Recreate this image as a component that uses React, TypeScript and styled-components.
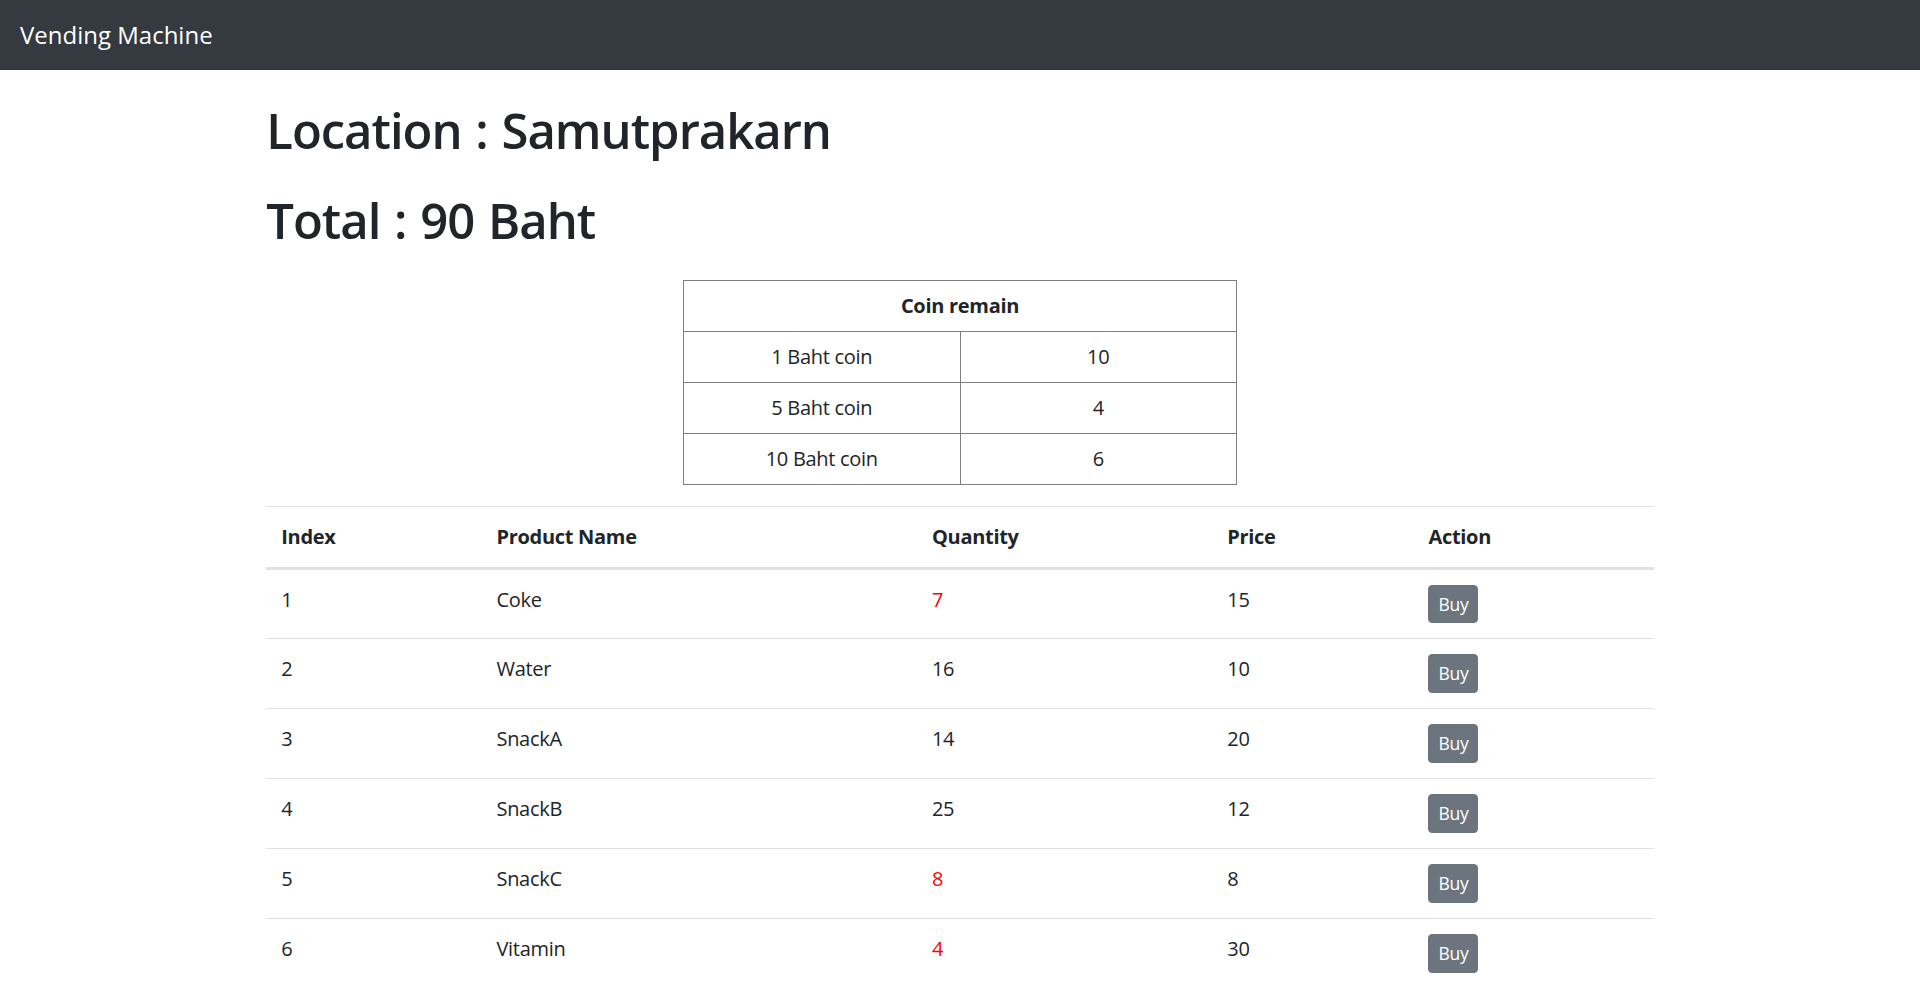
import React from "react";
import styled, { createGlobalStyle } from "styled-components";

const GlobalStyle = createGlobalStyle`
  * { box-sizing: border-box; }
  body {
    margin: 0;
    font-family: "Open Sans", "Noto Sans", sans-serif;
    font-size: 20px;
    line-height: 1.5;
    color: #212529;
    background: #fff;
  }
`;

interface Product {
  name: string;
  quantity: number;
  price: number;
}

const products: Product[] = [
  { name: "Coke", quantity: 7, price: 15 },
  { name: "Water", quantity: 16, price: 10 },
  { name: "SnackA", quantity: 14, price: 20 },
  { name: "SnackB", quantity: 25, price: 12 },
  { name: "SnackC", quantity: 8, price: 8 },
  { name: "Vitamin", quantity: 4, price: 30 },
];

const coins = [
  { label: "1 Baht coin", amount: 10 },
  { label: "5 Baht coin", amount: 4 },
  { label: "10 Baht coin", amount: 6 },
];

const columns = [
  { title: "Index", width: 215 },
  { title: "Product Name", width: 435 },
  { title: "Quantity", width: 295 },
  { title: "Price", width: 201 },
  { title: "Action", width: 240 },
];

function App() {
  return (
    <>
      <GlobalStyle />
      <Navbar>
        <Brand>Vending Machine</Brand>
      </Navbar>
      <Container>
        <Heading>Location : Samutprakarn</Heading>
        <Heading $last>Total : 90 Baht</Heading>
        <CoinTable>
          <thead>
            <tr>
              <th colSpan={2}>Coin remain</th>
            </tr>
          </thead>
          <tbody>
            {coins.map((c) => (
              <tr key={c.label}>
                <td>{c.label}</td>
                <td>{c.amount}</td>
              </tr>
            ))}
          </tbody>
        </CoinTable>
        <ProductTable>
          <colgroup>
            {columns.map((c) => (
              <Col key={c.title} $w={c.width} />
            ))}
          </colgroup>
          <thead>
            <tr>
              {columns.map((c) => (
                <th key={c.title}>{c.title}</th>
              ))}
            </tr>
          </thead>
          <tbody>
            {products.map((p, i) => (
              <tr key={p.name}>
                <td>{i + 1}</td>
                <td>{p.name}</td>
                <Qty $low={p.quantity < 10}>{p.quantity}</Qty>
                <td>{p.price}</td>
                <td>
                  <BuyButton>Buy</BuyButton>
                </td>
              </tr>
            ))}
          </tbody>
        </ProductTable>
      </Container>
    </>
  );
}

const Navbar = styled.nav`
  background-color: #343a40;
  height: 70px;
  padding: 10px 20px;
  display: flex;
  align-items: center;
`;

const Brand = styled.a`
  color: #fff;
  font-size: 24px;
  line-height: 37.5px;
  padding: 6px 0;
`;

const Container = styled.div`
  width: 1425px;
  margin: 0 auto;
  padding: 30px 18.75px 0;
`;

const Heading = styled.h1<{ $last?: boolean }>`
  margin: 0 0 ${(p) => (p.$last ? "30px" : "30px")};
  font-size: 49px;
  font-weight: 600;
  letter-spacing: -1px;
  word-spacing: 2px;
  line-height: 60px;
`;

const CoinTable = styled.table`
  width: 554px;
  margin: 0 auto 21px;
  border-collapse: collapse;
  border: 1px solid #333;
  text-align: center;

  th,
  td {
    border: 1px solid #808080;
    height: 51px;
    padding: 0 10px;
    font-size: 20px;
    letter-spacing: -0.3px;
  }

  th {
    font-weight: 700;
  }

  td:first-child {
    width: 50%;
  }
`;

const Col = styled.col<{ $w: number }>`
  width: ${(p) => p.$w}px;
`;

const ProductTable = styled.table`
  width: 100%;
  border-collapse: collapse;
  table-layout: fixed;

  th,
  td {
    padding: 15px;
    text-align: left;
    vertical-align: top;
    border-top: 1px solid #dee2e6;
    line-height: 30px;
    letter-spacing: -0.3px;
  }

  tbody td {
    height: 70px;
  }

  thead th {
    font-weight: 700;
    border-bottom: 3px solid #dee2e6;
  }
`;

const Qty = styled.td<{ $low: boolean }>`
  color: ${(p) => (p.$low ? "red" : "#212529")};
`;

const BuyButton = styled.button`
  display: inline-block;
  background-color: #6c757d;
  border: 1px solid #6c757d;
  color: #fff;
  font-family: inherit;
  font-size: 17.5px;
  letter-spacing: -0.3px;
  line-height: 26.25px;
  padding: 5px 9px;
  border-radius: 4px;
  cursor: pointer;
`;

export default App;
